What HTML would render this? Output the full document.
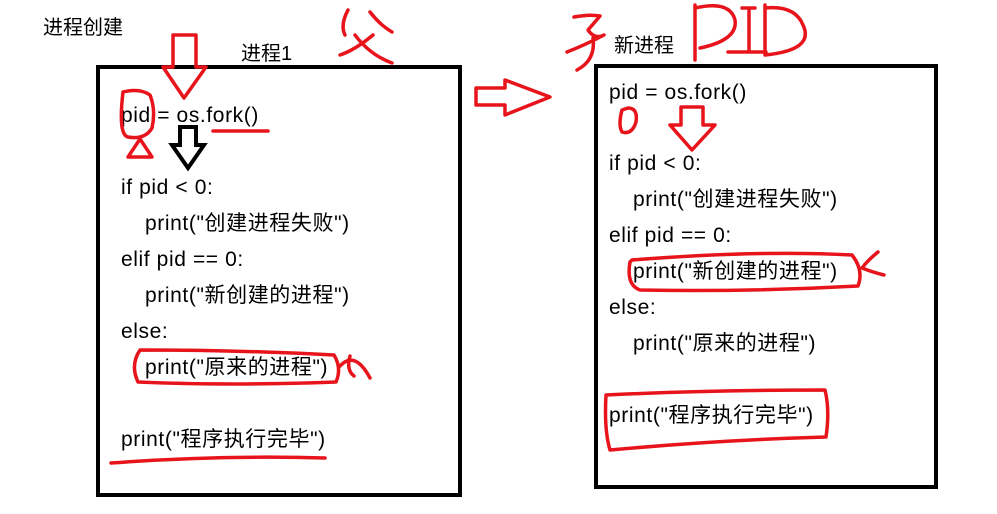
<!DOCTYPE html><html><head><meta charset="utf-8"><style>body{margin:0;background:#fff}svg{display:block}text{font-family:"Liberation Sans","Noto Sans CJK SC",sans-serif;font-size:21px;letter-spacing:0.6px;fill:#000}</style></head><body>
<svg width="997" height="514" viewBox="0 0 997 514" xmlns="http://www.w3.org/2000/svg">
<rect x="98" y="67" width="362" height="428" fill="none" stroke="#000" stroke-width="4"/>
<rect x="596" y="66" width="340" height="421" fill="none" stroke="#000" stroke-width="4"/>
<text x="43" y="34" style="font-size:20px;letter-spacing:0">进程创建</text>
<text x="241" y="60" style="font-size:20px;letter-spacing:0">进程1</text>
<text x="614" y="52" style="font-size:20px;letter-spacing:0">新进程</text>
<g>
<text x="121" y="122">pid = os.fork()</text>
<text x="121" y="194">if pid &lt; 0:</text>
<text x="145" y="230">print("创建进程失败")</text>
<text x="121" y="266">elif pid == 0:</text>
<text x="145" y="302">print("新创建的进程")</text>
<text x="121" y="338">else:</text>
<text x="145" y="374">print("原来的进程")</text>
<text x="121" y="446">print("程序执行完毕")</text>
</g>
<g>
<text x="609" y="99">pid = os.fork()</text>
<text x="609" y="170">if pid &lt; 0:</text>
<text x="633" y="206">print("创建进程失败")</text>
<text x="609" y="242">elif pid == 0:</text>
<text x="633" y="278">print("新创建的进程")</text>
<text x="609" y="314">else:</text>
<text x="633" y="350">print("原来的进程")</text>
<text x="609" y="422">print("程序执行完毕")</text>
</g>
<g fill="none" stroke="#e8141c" stroke-width="3.5" stroke-linecap="round" stroke-linejoin="round">
<path d="M173 35H196V67H206L184 98L163 67H173Z"/>
<path d="M123 92Q118 135 128 137Q145 140 152 128Q156 110 150 95Q140 88 123 92Z M140 139L128 157H152Z"/>
<path d="M213 131H268"/>
<path d="M348 10Q340 25 345 35 M370 12Q380 25 392 32 M373 35Q355 50 340 55 M355 35Q370 55 392 63"/>
<path d="M476 88H505V80L550 97L505 115V105H476Z"/>
<path d="M574 17Q590 14 600 16L588 30Q595 40 604 35Q585 45 567 52 M593 38Q596 60 577 70"/>
<path d="M695 5V60 M695 8Q730 0 735 20Q738 40 700 48 M742 8H755 M749 8V50 M728 52H766 M765 5V55Q815 50 803 25Q795 5 765 8"/>
<path d="M622 110Q618 125 622 132Q632 135 636 122Q638 108 628 108Z"/>
<path d="M681 107H703V125H715L692 150L670 125H681Z"/>
<path d="M630 262Q626 285 640 290Q750 292 858 286Q864 270 852 255Q760 250 632 260Z"/>
<path d="M878 252Q868 260 862 268Q872 272 884 275"/>
<path d="M140 350Q130 365 138 382Q230 386 336 382Q342 368 334 355Q240 350 140 350Z"/>
<path d="M350 356Q346 370 354 376 M340 366Q355 350 370 378"/>
<path d="M606 395Q604 430 610 450Q720 440 826 437Q830 410 825 390Q710 390 606 395Z"/>
<path d="M111 463Q220 455 325 458"/>
</g>
<path d="M180 127H196V145H204L188 168L172 145H180Z" fill="none" stroke="#000" stroke-width="4"/>
</svg></body></html>
